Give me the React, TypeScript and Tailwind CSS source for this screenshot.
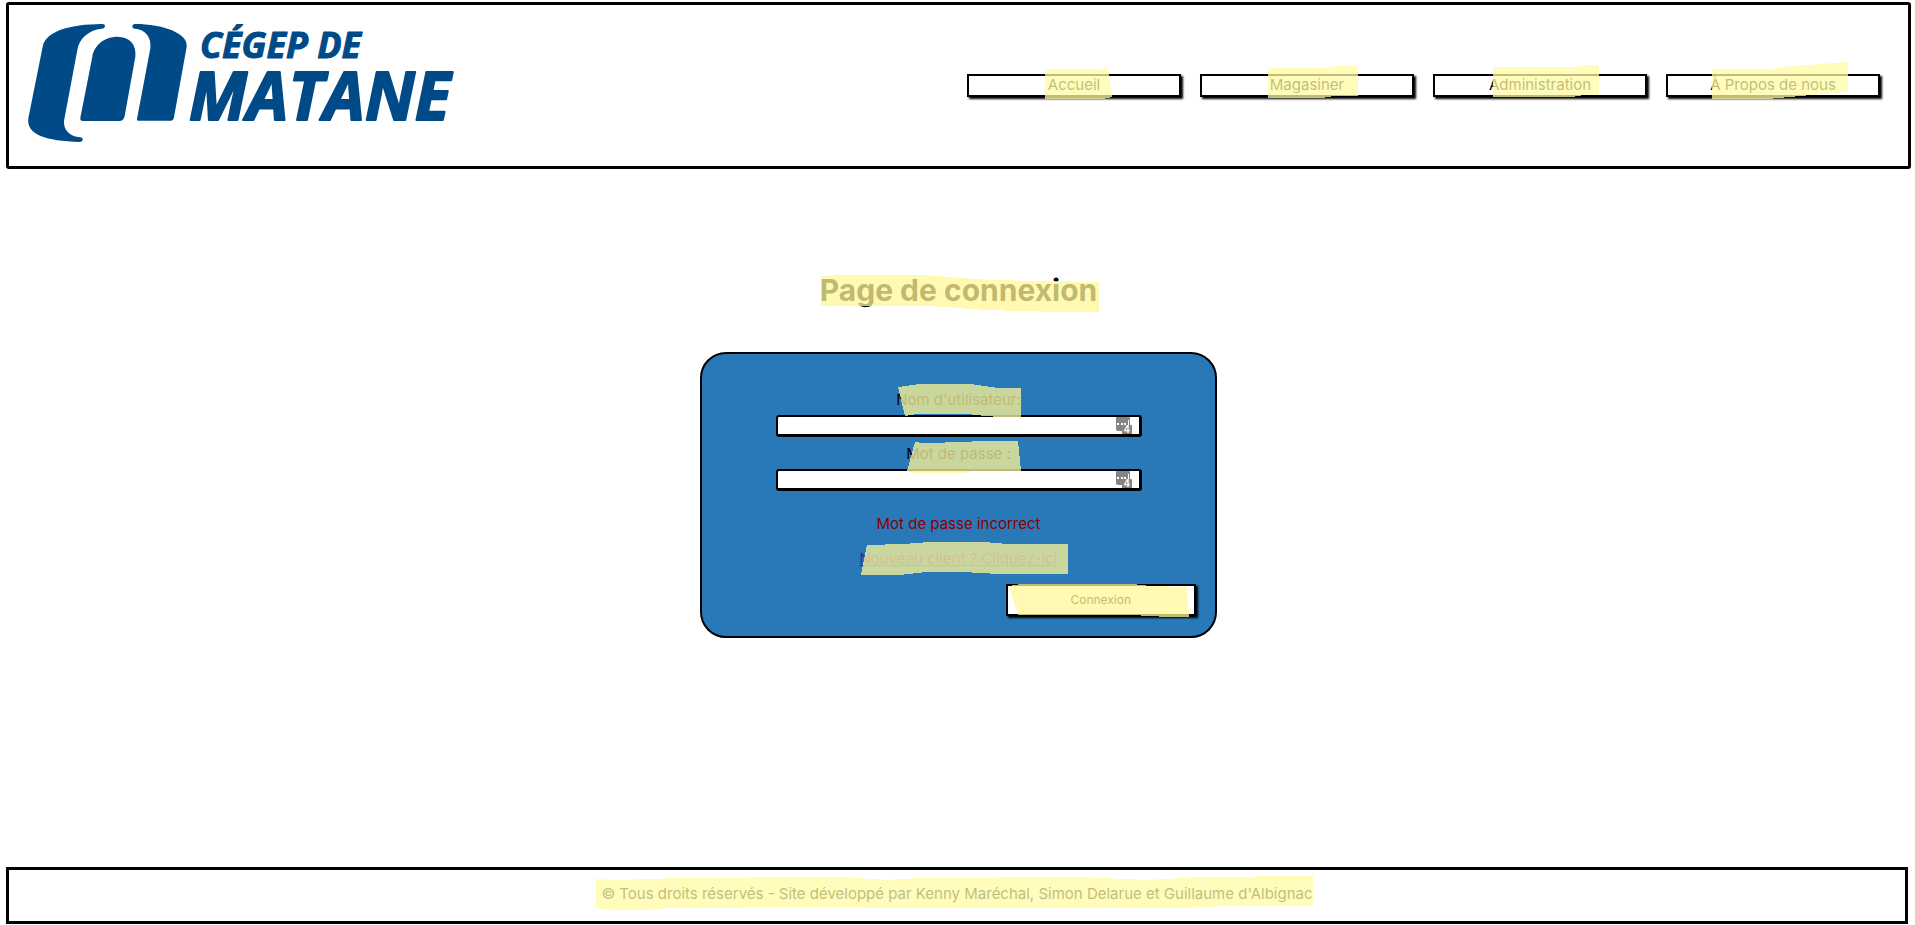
import React from "react";

type HighlightProps = { points: string; tone?: "soft" | "strong" };

// Marker stroke; its origin is the top centre of the positioned parent.
function Highlight({ points, tone = "soft" }: HighlightProps) {
  return (
    <svg
      aria-hidden="true"
      width="1"
      height="1"
      className="pointer-events-none absolute left-1/2 top-0 overflow-visible"
    >
      <polygon
        points={points}
        fill={tone === "soft" ? "#fffba6" : "#fff797"}
        fillOpacity="0.75"
        shapeRendering="crispEdges"
      />
    </svg>
  );
}

function Logo() {
  return (
    <svg
      role="img"
      aria-label="Cégep de Matane"
      width="430"
      height="119"
      viewBox="0 0 430 119"
      className="mt-[18px] mb-[24px] shrink-0 overflow-visible fill-[#004b87]"
    >
      <g transform="scale(0.33333) translate(-24 -24)">
        <path d="M68 95 C78 48 150 28 245 27 Q255 26 255 33 Q255 40 245 41 C205 45 177 72 172 105 L132 318 C130 345 150 365 180 367 Q189 368 188 375 Q187 381 178 381 C80 378 18 360 25 310 Z" />
        <path d="M217 125 C222 90 255 65 292 65 C330 65 350 90 346 125 L314 303 Q311 318 298 318 L188 318 Q180 318 181 308 Z" />
        <path d="M345 27 C430 27 505 55 500 95 L462 307 Q460 317 454 317 L354 317 Q350 317 351 312 L391 100 C395 65 375 43 345 41 Q336 40 337 33 Q338 27 345 27 Z" />
      </g>
      <g
        fontFamily="'Open Sans', sans-serif"
        fontWeight="700"
        fontStyle="italic"
        stroke="#004b87"
        strokeLinejoin="round"
      >
        <text x="172" y="35" fontSize="36" strokeWidth="1">
          CÉGEP DE
        </text>
        <text x="161" y="97" fontSize="66" strokeWidth="2">
          MATANE
        </text>
      </g>
    </svg>
  );
}

const links = [
  { label: "Accueil", points: "-29,-7 27,-7 34,-9 35,-1 38,21 29,23 -29,23" },
  { label: "Magasiner", points: "-39,-8 19,-8 30,-10 51,-10 51,20 27,20 15,22 -39,22" },
  { label: "Administration", points: "-47,-9 35,-9 47,-11 59,-11 59,19 44,19 32,21 -47,21" },
  { label: "À Propos de nous", points: "-61,-7 -3,-7 20,-10 75,-14 75,16 27,20 6,22 -6,23 -61,23" },
];

function PasswordManagerIcon() {
  return (
    <svg
      aria-hidden="true"
      width="17"
      height="17"
      viewBox="0 0 17 17"
      className="pointer-events-none absolute right-[9px] top-[2px]"
    >
      <path d="M0 1 Q0 0 1 0 H13 Q14 0 14 1 V8 H15 Q16 8 16 9 V17 H6 V14 H2 Q0 14 0 12 Z" fill="#858585" />
      <path d="M1 6h2v2h-2z M5 6h2v2h-2z M8 6h2v2h-2z M12 3h1v5h-1z" fill="#fff" />
      <text x="8" y="16" fontSize="10" fontWeight="700" fontFamily="'Liberation Sans', sans-serif" fill="#fff">
        4
      </text>
    </svg>
  );
}

type FieldProps = { id: string; label: string; type: string; points: string };

function Field({ id, label, type, points }: FieldProps) {
  return (
    <div className="relative flex w-full flex-col items-center gap-[5px]">
      <label htmlFor={id}>{label}</label>
      <div className="relative w-[366px] max-w-full">
        <input
          id={id}
          type={type}
          className="block h-[22px] w-full rounded-[3px] border-2 border-r-3 border-b-3 border-black bg-white pr-8 pl-1 text-[13px] outline-none"
        />
        <PasswordManagerIcon />
      </div>
      <Highlight tone="strong" points={points} />
    </div>
  );
}

export default function App() {
  return (
    <div className="flex min-h-screen flex-col bg-white font-['Inter',sans-serif] text-[15px] leading-5 text-black">
      <header className="mt-[2px] mr-1 ml-[6px] flex items-center justify-between rounded-[3px] border-3 border-black pr-7 pl-[19px]">
        <Logo />
        <nav className="flex gap-[19px]">
          {links.map((link) => (
            <a
              key={link.label}
              href="#"
              className="relative flex h-[23px] w-[214px] items-center justify-center border-2 border-black bg-white pb-[2px] shadow-[2px_2px_2px_#000]"
            >
              {link.label}
              <Highlight points={link.points} />
            </a>
          ))}
        </nav>
      </header>

      <main className="flex flex-1 flex-col items-center pt-[101px] pl-[2px]">
        <h1 className="relative w-full text-center text-[30px] leading-10 font-bold">
          Page de connexion
          <Highlight
            tone="strong"
            points="-138,6 -115,5 -36,5 29,10 140,12 140,42 109,42 57,41 9,39 -12,37 -36,36 -138,36"
          />
        </h1>

        <form
          onSubmit={(event: React.FormEvent) => event.preventDefault()}
          className="mt-[42px] flex w-[27%] min-w-[420px] flex-col items-center rounded-[26px] border-2 border-black bg-[#2979b9] pt-9 pb-5"
        >
          <div className="flex w-full flex-col gap-[7px]">
            <Field
              id="username"
              label="Nom d'utilisateur:"
              type="text"
              points="-61,-3 -39,-6 11,-6 39,-2 62,-2 62,27 41,27 27,26 8,24 -42,24 -54,26"
            />
            <Field
              id="password"
              label="Mot de passe :"
              type="password"
              points="-44,-2 -36,-1 8,-2 18,-3 59,-3 61,17 62,27 14,27 4,29 -46,29 -52,27"
            />
          </div>
          <p className="mt-[23px] text-[#8b0000]">Mot de passe incorrect</p>
          <div className="relative mt-[15px] w-full text-center">
            <a href="#" className="text-[#551a8b] underline">
              Nouveau client ? Cliquez-ici
            </a>
            <Highlight
              tone="strong"
              points="-92,-4 -56,-5 -29,-7 25,-7 49,-5 109,-5 109,25 37,25 25,24 1,23 -32,23 -60,26 -98,26"
            />
          </div>
          <button
            type="submit"
            className="relative mt-[15px] mr-[19px] h-8 w-[190px] self-end border-2 border-black bg-white text-[12px] shadow-[2px_2px_2px_#000]"
          >
            Connexion
            <Highlight
              tone="strong"
              points="-92,0 -80,-2 31,-2 49,0 86,1 88,31 67,31 31,29 -83,29"
            />
          </button>
        </form>
      </main>

      <footer className="relative mr-[7px] mb-px ml-[6px] border-3 border-black pt-[13px] pb-[17px] text-center leading-[21px]">
        © Tous droits réservés - Site développé par Kenny Maréchal, Simon Delarue et Guillaume d'Albignac
        <Highlight points="-361,9 -344,10 -304,9 -282,8 -135,7 -115,7 -70,10 -37,8 122,7 190,10 240,7 356,6 356,36 270,36 224,38 3,38 -70,38 -115,37 -139,37 -286,38 -307,40 -344,40 -361,38" />
      </footer>
    </div>
  );
}
